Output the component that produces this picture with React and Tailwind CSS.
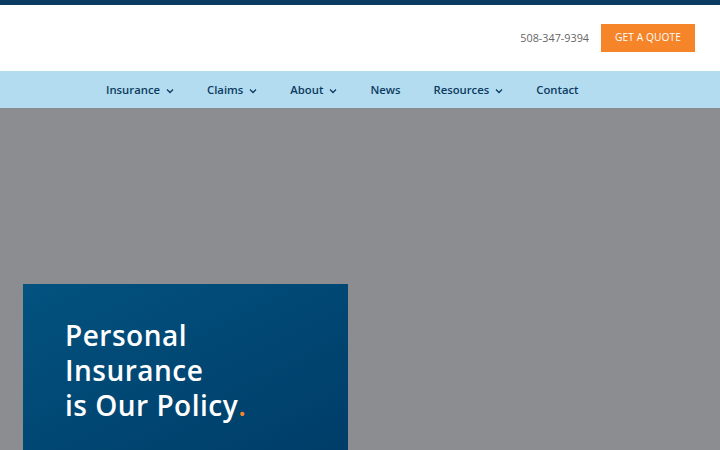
import React from "react";

function Chevron() {
  return (
    <svg width="8" height="6" viewBox="0 0 8 6" className="ml-[6px] mt-[1px]" fill="none" stroke="currentColor" strokeWidth="1.3">
      <path d="M1 1.5 L4 4.5 L7 1.5" />
    </svg>
  );
}

export default function App() {
  const nav = [
    { label: "Insurance", dd: true },
    { label: "Claims", dd: true },
    { label: "About", dd: true },
    { label: "News", dd: false },
    { label: "Resources", dd: true },
    { label: "Contact", dd: false },
  ];
  return (
    <div className="w-[720px] h-[450px] overflow-hidden flex flex-col bg-[#8c8d90]" style={{ fontFamily: '"Open Sans", "DejaVu Sans", sans-serif' }}>
      <div className="h-[5px] bg-[#0b3a63] shrink-0" />
      <header className="h-[66px] bg-white flex items-center justify-end pr-[25px] shrink-0">
        <span className="text-[10.8px] text-[#666666] mr-[12px]">508-347-9394</span>
        <button className="w-[94px] h-[28px] bg-[#f68428] text-white text-[10.2px] font-medium tracking-[0.1px]">GET A QUOTE</button>
      </header>
      <nav className="h-[37px] bg-[#b3dcf0] flex items-center pl-[106px] pt-[2px] gap-[33px] text-[#0d3b60] text-[11.3px] font-semibold shrink-0">
        {nav.map((n) => (
          <div key={n.label} className="flex items-center">
            <span>{n.label}</span>
            {n.dd && <Chevron />}
          </div>
        ))}
      </nav>
      <main className="flex-1 pt-[176px] pl-[23px]">
        <div className="w-[325px] h-full bg-gradient-to-br from-[#03527f] to-[#003d69] pt-[34px] pl-[42px]">
          <h1 className="text-white text-[28px] font-semibold leading-[35px] tracking-[0.5px]">
            Personal
            <br />
            Insurance
            <br />
            is Our Policy<span className="text-[#f68428]">.</span>
          </h1>
        </div>
      </main>
    </div>
  );
}
